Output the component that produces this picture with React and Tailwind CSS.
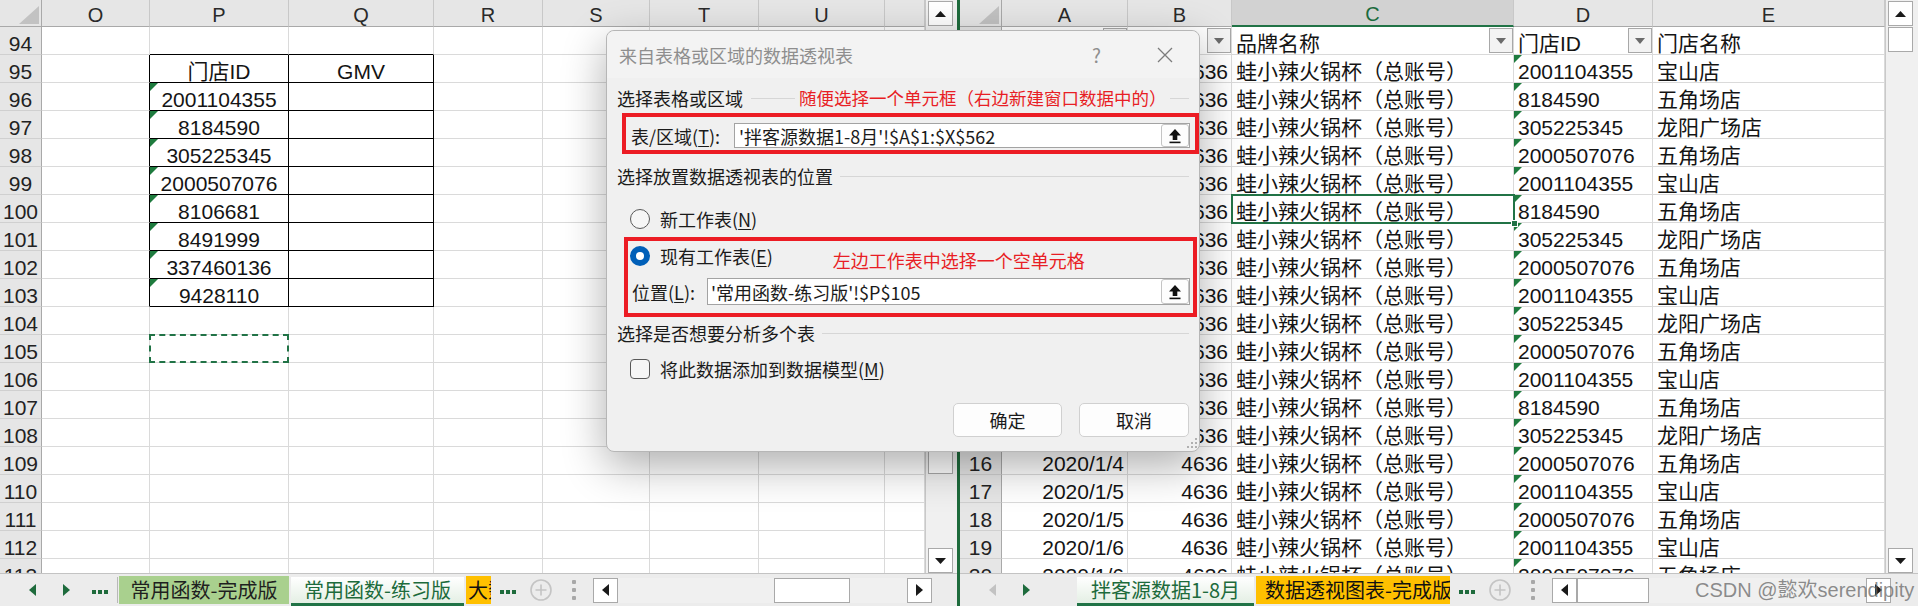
import React from 'react';

const XL = "font-['Liberation_Sans','Noto_Sans_CJK_SC',sans-serif]";
const UI = "font-['Noto_Sans_CJK_SC','Noto_Sans',sans-serif]";

const leftCols = [
  { id: 'O', w: 'w-[108px]' },
  { id: 'P', w: 'w-[139px]' },
  { id: 'Q', w: 'w-[145px]' },
  { id: 'R', w: 'w-[109px]' },
  { id: 'S', w: 'w-[107px]' },
  { id: 'T', w: 'w-[109px]' },
  { id: 'U', w: 'w-[126px]' },
  { id: '', w: 'w-[40px]' },
];

const rightCols = [
  { id: 'A', w: 'w-[126px]' },
  { id: 'B', w: 'w-[104px]' },
  { id: 'C', w: 'w-[282px]', sel: true },
  { id: 'D', w: 'w-[139px]' },
  { id: 'E', w: 'w-[232px]' },
];

const pVals = ['2001104355', '8184590', '305225345', '2000507076', '8106681', '8491999', '337460136', '9428110'];

const ids = [
  '2001104355', '8184590', '305225345', '2000507076', '2001104355', '8184590', '305225345',
  '2000507076', '2001104355', '305225345', '2000507076', '2001104355', '8184590', '305225345',
  '2000507076', '2001104355', '2000507076', '2001104355', '2000507076',
];
const stores = { '2001104355': '宝山店', '8184590': '五角场店', '305225345': '龙阳广场店', '2000507076': '五角场店' };
const dates = [
  '2020/1/1', '2020/1/1', '2020/1/1', '2020/1/1', '2020/1/2', '2020/1/2', '2020/1/2', '2020/1/2',
  '2020/1/3', '2020/1/3', '2020/1/3', '2020/1/3', '2020/1/3', '2020/1/3', '2020/1/4', '2020/1/5',
  '2020/1/5', '2020/1/6', '2020/1/6',
];

function leftCells(n) {
  const inT = n >= 95 && n <= 103;
  const cells = [{ r: inT }, {}, {}, {}, {}, {}, {}, {}];
  if (n === 94) {
    cells[1] = { b: true };
    cells[2] = { b: true };
  }
  if (inT) {
    cells[1] = { r: true, b: true, a: 'c', t: n === 95 ? '门店ID' : pVals[n - 96], tri: n > 95 };
    cells[2] = { r: true, b: true, a: 'c', t: n === 95 ? 'GMV' : '' };
  }
  if (n === 105) cells[1] = { ants: true };
  return cells;
}

function rightCells(n) {
  if (n === 1) {
    return [{ t: '日期', filt: true }, { t: '品牌ID', filt: true }, { t: '品牌名称', filt: true }, { t: '门店ID', filt: true }, { t: '门店名称' }];
  }
  const id = ids[n - 2];
  return [
    { t: dates[n - 2], a: 'r' },
    { t: '4636', a: 'r' },
    { t: '蛙小辣火锅杯（总账号）', act: n === 7 },
    { t: id, tri: true },
    { t: stores[id] },
  ];
}

const leftRows = Array.from({ length: 20 }, (_, i) => ({ n: 94 + i, cells: leftCells(94 + i) }));
const rightRows = Array.from({ length: 20 }, (_, i) => ({ n: 1 + i, cells: rightCells(1 + i) }));

function FilterBtn() {
  return (
    <span className="absolute right-0 top-[1px] w-[24px] h-[25px] bg-[#f3f3f3] border border-[#a8a8a8] flex items-center justify-center z-[5]">
      <svg width="10" height="6" viewBox="0 0 10 6"><polygon points="0,0 10,0 5,6" fill="#6b6b6b" /></svg>
    </span>
  );
}

function Cell({ w, c }) {
  const { t = '', a = 'l', r, b, tri, ants, act, filt } = c || {};
  const align = a === 'c' ? 'justify-center' : a === 'r' ? 'justify-end pr-[3px]' : 'justify-start pl-[4px]';
  return (
    <div
      className={`relative ${w} h-full shrink-0 flex items-end ${align} border-r border-b ${r ? 'border-r-black' : 'border-r-[#dadada]'} ${b ? 'border-b-black' : 'border-b-[#dadada]'}`}
    >
      {tri && <span className="absolute left-0 top-0 w-0 h-0 border-t-[8px] border-r-[8px] border-t-[#1e7b3e] border-r-transparent" />}
      <span className="leading-[20px] whitespace-nowrap">{t}</span>
      {filt && <FilterBtn />}
      {ants && <span className="absolute left-[-1px] top-[-1px] right-[-1px] bottom-[-1px] border-2 border-dashed border-[#217346] z-10" />}
      {act && (
        <span className="absolute left-[-1px] top-[-1px] right-[-2px] bottom-[-2px] border-2 border-[#217346] z-10">
          <span className="absolute right-[-5px] bottom-[-5px] w-[7px] h-[7px] bg-[#217346] border border-white" />
        </span>
      )}
    </div>
  );
}

function ColHeader({ cols }) {
  return (
    <div className="flex h-[27px] shrink-0">
      <div className="relative w-[42px] shrink-0 bg-[#e6e6e6] border-r border-b border-[#a9a9a9]">
        <svg className="absolute right-[2px] bottom-[2px]" width="20" height="18" viewBox="0 0 20 18">
          <polygon points="20,0 20,18 0,18" fill="#c2c2c2" />
        </svg>
      </div>
      {cols.map((c, i) => (
        <div
          key={i}
          className={`${c.w} shrink-0 flex items-end justify-center text-[20px] border-r border-r-[#c8c8c8] ${
            c.sel ? 'bg-[#d2d2d2] text-[#1a6b3d] border-b-2 border-b-[#217346]' : 'bg-[#e6e6e6] text-[#2a2a2a] border-b border-b-[#a9a9a9]'
          }`}
        >
          <span className="leading-[20px] pb-[1px]">{c.id}</span>
        </div>
      ))}
    </div>
  );
}

function Row({ n, cols, cells }) {
  return (
    <div className="flex h-[28px] shrink-0">
      <div className="w-[42px] shrink-0 bg-[#e6e6e6] border-r border-r-[#a9a9a9] border-b border-b-[#d0d0d0] flex items-end justify-center text-[#222]">
        <span className="leading-[20px]">{n}</span>
      </div>
      {cols.map((c, i) => (
        <Cell key={i} w={c.w} c={cells[i]} />
      ))}
    </div>
  );
}

function Sheet({ cols, rows }) {
  return (
    <div className={`w-[925px] shrink-0 h-full overflow-hidden flex flex-col bg-white text-[21px] text-[#141414] ${XL}`}>
      <ColHeader cols={cols} />
      {rows.map((r) => (
        <Row key={r.n} n={r.n} cols={cols} cells={r.cells} />
      ))}
    </div>
  );
}

function Tri({ dir, c = '#1a1a1a' }) {
  if (dir === 'up') return <svg width="11" height="6" viewBox="0 0 11 6"><polygon points="0,6 5.5,0 11,6" fill={c} /></svg>;
  if (dir === 'down') return <svg width="11" height="6" viewBox="0 0 11 6"><polygon points="0,0 11,0 5.5,6" fill={c} /></svg>;
  if (dir === 'left') return <svg width="7" height="12" viewBox="0 0 7 12"><polygon points="7,0 7,12 0,6" fill={c} /></svg>;
  return <svg width="7" height="12" viewBox="0 0 7 12"><polygon points="0,0 7,6 0,12" fill={c} /></svg>;
}

function SBtn({ dir }) {
  return (
    <div className="w-[25px] h-[25px] shrink-0 bg-white border border-[#a9a9a9] flex items-center justify-center">
      <Tri dir={dir} />
    </div>
  );
}

function VScroll({ w, thumb }) {
  return (
    <div className={`${w} shrink-0 h-full bg-[#f0f0f0] border-l border-[#c9c9c9] flex flex-col pl-[2px] pt-[1px] pb-[0px]`}>
      <SBtn dir="up" />
      {thumb}
      <div className="flex-1" />
      <SBtn dir="down" />
    </div>
  );
}

function Dots() {
  return (
    <svg width="16" height="5" viewBox="0 0 16 5">
      <rect x="0" y="0" width="4" height="4" fill="#1e6b3c" />
      <rect x="6" y="0" width="4" height="4" fill="#1e6b3c" />
      <rect x="12" y="0" width="4" height="4" fill="#1e6b3c" />
    </svg>
  );
}

function PlusCircle() {
  return (
    <svg width="22" height="22" viewBox="0 0 22 22">
      <circle cx="11" cy="11" r="10" fill="none" stroke="#c4c4c4" strokeWidth="1.6" />
      <path d="M11 5.5v11M5.5 11h11" stroke="#c4c4c4" strokeWidth="1.6" />
    </svg>
  );
}

function VDots() {
  return (
    <svg width="4" height="20" viewBox="0 0 4 20">
      <rect x="0" y="0" width="4" height="4" rx="1" fill="#a8a8a8" />
      <rect x="0" y="8" width="4" height="4" rx="1" fill="#a8a8a8" />
      <rect x="0" y="16" width="4" height="4" rx="1" fill="#a8a8a8" />
    </svg>
  );
}

function HScroll({ trackW, thumbMl, thumbW }) {
  return (
    <div className="flex items-center h-[25px]">
      <SBtn dir="left" />
      <div className={`${trackW} h-[25px] bg-[#f0f0f0] flex`}>
        <div className={`${thumbMl} ${thumbW} h-[25px] bg-white border border-[#a9a9a9]`} />
      </div>
      <SBtn dir="right" />
    </div>
  );
}

function LeftTabs() {
  return (
    <div className={`h-[33px] shrink-0 bg-[#ececec] border-t border-[#c3c3c3] flex items-center ${UI}`}>
      <div className="ml-[29px]"><Tri dir="left" c="#1e6b3c" /></div>
      <div className="ml-[27px]"><Tri dir="right" c="#1e6b3c" /></div>
      <div className="ml-[22px] mt-[4px]"><Dots /></div>
      <div className="ml-[9px] w-px h-[26px] bg-[#b8b8b8]" />
      <div className="ml-[1px] w-[170px] h-[28px] shrink-0 bg-[#a9d08e] text-[#1f1f1f] text-[20px] flex items-center justify-center whitespace-nowrap">
        常用函数-完成版
      </div>
      <div className="ml-[2px] w-[173px] h-[29px] shrink-0 bg-linear-to-b from-white to-[#e4efe4] text-[#1d6b3c] text-[20px] flex items-center justify-center whitespace-nowrap border-b-[3px] border-[#217346] self-end">
        常用函数-练习版
      </div>
      <div className="ml-[2px] w-[25px] h-[28px] shrink-0 bg-[#ffc000] text-[#111] text-[20px] flex items-center pl-[2px] overflow-hidden whitespace-nowrap">
        大数据
      </div>
      <div className="ml-[9px] mt-[4px]"><Dots /></div>
      <div className="ml-[14px] flex"><PlusCircle /></div>
      <div className="ml-[20px] flex"><VDots /></div>
      <div className="ml-[17px]">
        <HScroll trackW="w-[289px]" thumbMl="ml-[156px]" thumbW="w-[76px]" />
      </div>
    </div>
  );
}

function RightTabs() {
  return (
    <div className={`relative h-[33px] shrink-0 bg-[#ececec] border-t border-[#c3c3c3] flex items-center ${UI}`}>
      <div className="ml-[29px]"><Tri dir="left" c="#c2c2c2" /></div>
      <div className="ml-[27px]"><Tri dir="right" c="#1e6b3c" /></div>
      <div className="ml-[47px] w-[177px] h-[29px] shrink-0 bg-linear-to-b from-white to-[#e4efe4] text-[#1d6b3c] text-[20px] flex items-center justify-center whitespace-nowrap border-b-[3px] border-[#217346] self-end">
        拌客源数据1-8月
      </div>
      <div className="ml-[2px] w-[194px] h-[28px] shrink-0 bg-[#ffc000] text-[#111] text-[20px] flex items-center pl-[9px] overflow-hidden whitespace-nowrap">
        数据透视图表-完成版
      </div>
      <div className="ml-[9px] mt-[4px]"><Dots /></div>
      <div className="ml-[14px] flex"><PlusCircle /></div>
      <div className="ml-[20px] flex"><VDots /></div>
      <div className="ml-[17px]">
        <HScroll trackW="w-[289px]" thumbMl="ml-0" thumbW="w-[72px]" />
      </div>
      <span className="absolute left-[735px] top-[2px] text-[20px] leading-[28px] text-[rgba(105,105,105,0.75)] font-['Liberation_Sans','Noto_Sans_CJK_SC',sans-serif] whitespace-nowrap z-20">
        CSDN @懿欢serendipity
      </span>
    </div>
  );
}

function UploadBtn() {
  return (
    <div className="ml-auto w-[28px] h-full shrink-0 bg-[#fdfdfd] border border-[#c4c4c4] rounded-[3px] flex items-center justify-center">
      <svg width="14" height="16" viewBox="0 0 14 16">
        <polygon points="7,1 13,7.5 9.3,7.5 9.3,12 4.7,12 4.7,7.5 1,7.5" fill="#111" />
        <rect x="1.5" y="13.6" width="11" height="1.6" fill="#111" />
      </svg>
    </div>
  );
}

function SectionLabel({ children, extra }) {
  return (
    <div className="flex items-center h-[24px]">
      <span className="leading-[24px] whitespace-nowrap">{children}</span>
      {extra || <div className="flex-1 ml-[7px] h-px bg-[#d6d6d6]" />}
    </div>
  );
}

function Radio({ on }) {
  return on ? (
    <span className="w-[20px] h-[20px] shrink-0 rounded-full bg-[#005fb8] flex items-center justify-center">
      <span className="w-[8px] h-[8px] rounded-full bg-white" />
    </span>
  ) : (
    <span className="w-[20px] h-[20px] shrink-0 rounded-full border border-[#595959] bg-[#f6f6f6]" />
  );
}

function Dialog() {
  return (
    <div
      className={`absolute left-[606px] top-[30px] w-[594px] h-[422px] z-50 rounded-[8px] bg-[#f0f0f0] border border-[#b6b6b6] shadow-[0_14px_44px_rgba(0,0,0,0.32)] flex flex-col text-[18px] text-[#1b1b1b] ${UI}`}
    >
      <div className="h-[47px] shrink-0 flex items-center pl-[12px] pr-[26px] rounded-t-[8px] bg-[#f3f3f3]">
        <span className="text-[#8e8e8e] leading-[24px]">来自表格或区域的数据透视表</span>
        <span className="ml-auto text-[#8e8e8e] text-[19px] leading-[24px]">?</span>
        <svg className="ml-[56px]" width="16" height="16" viewBox="0 0 16 16">
          <path d="M1 1L15 15M15 1L1 15" stroke="#7c7c7c" strokeWidth="1.3" />
        </svg>
      </div>

      <div className="flex flex-col px-[10px]">
        <div className="mt-[8px]">
          <SectionLabel
            extra={
              <div className="flex-1 flex items-center">
                <div className="ml-[8px] w-[44px] h-px bg-[#d6d6d6]" />
                <span className="ml-[4px] text-[17.5px] leading-[24px] text-[#e81e25] whitespace-nowrap">随便选择一个单元框（右边新建窗口数据中的）</span>
                <div className="ml-[3px] flex-1 h-px bg-[#d6d6d6]" />
              </div>
            }
          >
            选择表格或区域
          </SectionLabel>
        </div>

        <div className="mt-[3px] ml-[5px] w-[577px] h-[41px] shrink-0 border-4 border-[#ec1c24] flex items-center pt-[4px] pl-[5px]">
          <span className="w-[103px] shrink-0 leading-[24px] whitespace-nowrap">
            表/区域(<span className="underline underline-offset-2">T</span>):
          </span>
          <div className="w-[456px] h-[25px] shrink-0 bg-white border border-[#a3a3a3] flex items-center">
            <span className="pl-[4px] leading-[22px] whitespace-nowrap">'拌客源数据1-8月'!$A$1:$X$562</span>
            <UploadBtn />
          </div>
        </div>

        <div className="mt-[10px]">
          <SectionLabel>选择放置数据透视表的位置</SectionLabel>
        </div>

        <div className="mt-[19px] h-[24px] flex items-center pl-[13px]">
          <Radio />
          <span className="ml-[10px] leading-[24px] whitespace-nowrap">
            新工作表(<span className="underline underline-offset-2">N</span>)
          </span>
        </div>

        <div className="mt-[6px] ml-[7px] w-[573px] h-[80px] shrink-0 border-4 border-[#ec1c24] flex flex-col">
          <div className="mt-[3px] h-[24px] flex items-center pl-[2px]">
            <Radio on />
            <span className="ml-[10px] leading-[24px] whitespace-nowrap">
              现有工作表(<span className="underline underline-offset-2">E</span>)
            </span>
            <span className="ml-[60px] pt-[8px] text-[18px] leading-[24px] text-[#e81e25] whitespace-nowrap">左边工作表中选择一个空单元格</span>
          </div>
          <div className="mt-[10px] h-[27px] flex items-center pl-[4px]">
            <span className="w-[75px] shrink-0 leading-[24px] whitespace-nowrap">
              位置(<span className="underline underline-offset-2">L</span>):
            </span>
            <div className="w-[483px] h-[27px] shrink-0 bg-white border border-[#a3a3a3] flex items-center">
              <span className="pl-[3px] leading-[22px] whitespace-nowrap">'常用函数-练习版'!$P$105</span>
              <UploadBtn />
            </div>
          </div>
        </div>

        <div className="mt-[4px]">
          <SectionLabel>选择是否想要分析多个表</SectionLabel>
        </div>

        <div className="mt-[12px] h-[24px] flex items-center pl-[13px]">
          <span className="w-[20px] h-[20px] shrink-0 rounded-[4px] border border-[#595959] bg-[#f6f6f6]" />
          <span className="ml-[10px] leading-[24px] whitespace-nowrap">
            将此数据添加到数据模型(<span className="underline underline-offset-2">M</span>)
          </span>
        </div>

        <div className="mt-[22px] h-[34px] flex justify-end gap-[17px]">
          <div className="w-[109px] h-[34px] rounded-[5px] bg-[#fdfdfd] border border-[#d0d0d0] flex items-center justify-center">确定</div>
          <div className="w-[110px] h-[34px] rounded-[5px] bg-[#fdfdfd] border border-[#d0d0d0] flex items-center justify-center">取消</div>
        </div>
      </div>

      <svg className="absolute right-[2px] bottom-[3px]" width="10" height="10" viewBox="0 0 10 10">
        <rect x="8" y="0" width="2" height="2" fill="#b0b0b0" />
        <rect x="4" y="4" width="2" height="2" fill="#b0b0b0" />
        <rect x="8" y="4" width="2" height="2" fill="#b0b0b0" />
        <rect x="0" y="8" width="2" height="2" fill="#b0b0b0" />
        <rect x="4" y="8" width="2" height="2" fill="#b0b0b0" />
        <rect x="8" y="8" width="2" height="2" fill="#b0b0b0" />
      </svg>
    </div>
  );
}

export default function App() {
  return (
    <div className="relative w-[1918px] h-[606px] overflow-hidden bg-white flex">
      <div className="w-[957px] h-full shrink-0 flex flex-col">
        <div className="h-[573px] shrink-0 flex overflow-hidden">
          <Sheet cols={leftCols} rows={leftRows} />
          <VScroll w="w-[32px]" thumb={<div className="mt-[404px] w-[25px] h-[44px] bg-white border border-[#a9a9a9]" />} />
        </div>
        <LeftTabs />
      </div>

      <div className="w-[3px] h-full shrink-0 bg-[#1e6b3c]" />

      <div className="w-[958px] h-full shrink-0 flex flex-col">
        <div className="h-[573px] shrink-0 flex overflow-hidden">
          <Sheet cols={rightCols} rows={rightRows} />
          <VScroll w="w-[33px]" thumb={<div className="mt-[1px] w-[25px] h-[25px] bg-white border border-[#a9a9a9]" />} />
        </div>
        <RightTabs />
      </div>

      <Dialog />
    </div>
  );
}
